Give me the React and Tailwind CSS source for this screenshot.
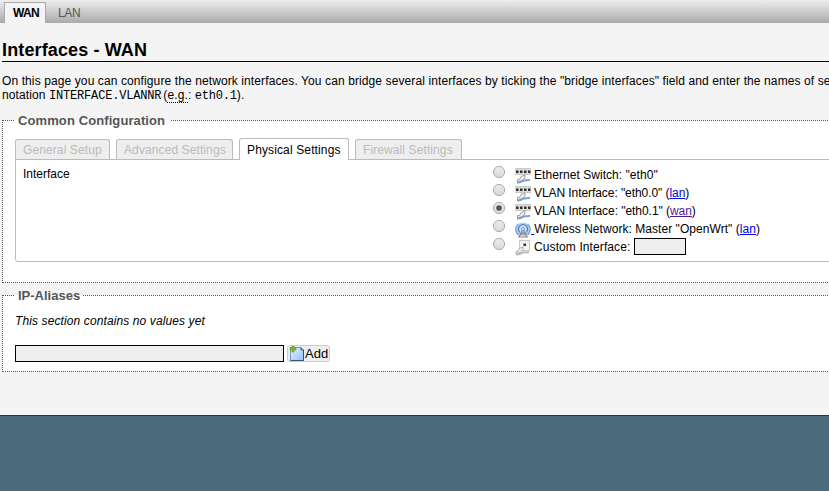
import React from "react";

const SwitchIcon = () => (
  <svg width="16" height="16" viewBox="0 0 16 16" className="shrink-0">
    <rect x="0" y="0" width="16" height="7" fill="#dcdcd8" />
    <path d="M0 6.500h16M0 .5h16" stroke="#c8c8c4" />
    <path d="M1 2.500h2.500v2.500H1zM5 2.500h2.500v2.500H5zM9 2.500h2.500v2.500H9zM13 2.500h2.500v2.500H13z" fill="#2e2e2e" />
    <path d="M2 14.500c5 0 4.500-1.500 7-2s3.500.5 6-1" fill="none" stroke="#7a9fd0" strokeWidth="2" />
    <path d="M6 8.500l4-1.500v3l-3 2.500-4.500 1.500v-2.500h2z" fill="#f0f0f0" stroke="#8e8e8e" strokeWidth=".8" />
  </svg>
);

const WifiIcon = () => (
  <svg width="16" height="16" viewBox="0 0 16 16" className="shrink-0">
    <ellipse cx="8" cy="7.500" rx="7.800" ry="7" fill="#b4d0f0" />
    <path d="M3.500 13A7 7 0 0 1 3.500 2M12.500 13A7 7 0 0 0 12.500 2" fill="none" stroke="#6f9fd8" strokeWidth="1.200" />
    <path d="M5 10.500A4.500 4.500 0 1 1 11 10.500" fill="#d0e2f8" stroke="#4e84c4" strokeWidth="1.300" />
    <path d="M8 7L4 15M8 7l4 8M5.500 12.500l4.500-2M10.500 12.500l-4.500-2M3 15h10" fill="none" stroke="#888" strokeWidth="1.100" />
    <circle cx="8" cy="7" r="1.500" fill="#f4f4f4" stroke="#56759a" strokeWidth=".7" />
  </svg>
);

const PlugIcon = () => (
  <svg width="16" height="16" viewBox="0 0 16 16" className="shrink-0">
    <rect x="4.500" y=".5" width="10" height="10" fill="#f2f2f2" stroke="#c9c9c9" />
    <rect x="8.500" y="3.500" width="2.500" height="2.500" fill="#333" />
    <path d="M1 14.500c5 0 4.500-1.500 7-2s3.500.5 6-.5" fill="none" stroke="#bdbdbd" strokeWidth="2" />
    <path d="M4 8.500l4-1.500v3l-3 2.500-4 1.500v-2.500h2z" fill="#f0f0f0" stroke="#a0a0a0" strokeWidth=".8" />
  </svg>
);

const AddIcon = () => (
  <svg width="16" height="16" viewBox="0 0 16 16" className="shrink-0">
    <defs>
      <linearGradient id="page" x1="0" y1="0" x2="1" y2="1">
        <stop offset="0" stopColor="#e4f1ff" />
        <stop offset="1" stopColor="#8fc3f8" />
      </linearGradient>
    </defs>
    <path d="M1.500 1.500h10.500l2.500 2.500v10.500h-13z" fill="url(#page)" stroke="#6f9bc9" />
    <path d="M12 1.500v2.500h2.500v10.500h-13" fill="none" stroke="#38516d" />
    <path d="M3 0h2v2h2v2H5v2H3V4H1V2h2z" fill="#7dbb2a" stroke="#5a9c1a" strokeWidth=".6" />
  </svg>
);

const Radio = ({ on }) => (
  <svg width="13" height="13" viewBox="0 0 13 13" className="mb-[6px] shrink-0">
    <defs>
      <linearGradient id="radio" x1="0" y1="0" x2="0" y2="1">
        <stop offset="0" stopColor="#ececec" />
        <stop offset="1" stopColor="#d8d8d8" />
      </linearGradient>
    </defs>
    <circle cx="6" cy="6" r="5.600" fill="url(#radio)" stroke="#acacac" />
    {on && <circle cx="6" cy="6" r="2.800" fill="#555" />}
  </svg>
);

const Row = ({ on, icon, children }) => (
  <div className="flex h-[18px] items-center">
    <Radio on={on} />
    <span className="mt-[2px] ml-[9px] flex">{icon}</span>
    {children}
  </div>
);

const Tab = ({ width, active, children }) => (
  <div
    className={
      active
        ? "z-10 -mb-px h-[22px] rounded-t-[3px] border border-b-0 border-[#bbb] bg-white pt-[3px] pl-[7px] tracking-[0.13px] text-black " + width
        : "h-[20px] rounded-t-[3px] border border-b-0 border-[#bbb] bg-[#eee] pt-[2px] pl-[7px] tracking-[0.1px] text-[#bbb] " + width
    }
  >
    {children}
  </div>
);

const link = "text-[#0000ee] underline";

export default function App() {
  return (
    <div className="flex h-[491px] w-[829px] flex-col overflow-hidden bg-[#4a6b7c] font-['Liberation_Sans',Arial,sans-serif] text-[12px] leading-[16px] whitespace-nowrap text-black">
      <div className="flex h-[415px] shrink-0 flex-col bg-[#f4f4f4]">
        <header className="flex h-[23px] shrink-0 items-end bg-linear-to-b from-[#eee] to-[#aaa] pl-[4px]">
          <div className="h-[21px] w-[42px] border border-b-0 border-[#aaa] bg-[#f4f4f4] pt-[2px] pl-[8px] font-bold tracking-[-0.9px]">
            <span className="tracking-[-0.7px]">WAN</span>
          </div>
          <div className="h-[21px] pt-[3px] pl-[12px] tracking-[-0.4px] text-[#555]">LAN</div>
        </header>

        <h2 className="mt-[16px] ml-[2px] h-[23px] w-[900px] shrink-0 border-b border-black text-[18px] leading-[22px] font-bold tracking-[0.13px]">
          Interfaces - WAN
        </h2>

        <p className="mt-[12px] ml-[2px] h-[39px] shrink-0 leading-[14px] tracking-[0.105px]">
          On this page you can configure the network interfaces. You can bridge several interfaces by ticking the "bridge interfaces" field and enter the names of se
          <br />
          notation <span className="font-['Liberation_Mono',monospace] tracking-[-0.18px]">INTERFACE.VLANNR</span><span className="ml-[2px]">(</span><span className="border-b border-dotted border-black">e.g.</span>:{" "}
          <span className="font-['Liberation_Mono',monospace] tracking-[-0.2px]">eth0.1</span>).
        </p>

        <fieldset className="ml-[2px] h-[170px] w-[900px] shrink-0 border border-dotted border-[#555] bg-white px-[12px]">
          <legend className="h-[15px] pr-[5px] pl-[3px] text-[13px] leading-[15px] font-bold tracking-[0.1px] text-[#555]">Common Configuration</legend>
          <div className="mt-[10px] flex items-end gap-[6px]">
            <Tab width="w-[95px]">General Setup</Tab>
            <Tab width="w-[117px]">Advanced Settings</Tab>
            <Tab width="w-[110px]" active>Physical Settings</Tab>
            <Tab width="w-[107px]">Firewall Settings</Tab>
          </div>
          <div className="flex h-[103px] w-[860px] rounded-bl-[3px] border border-[#bbb] bg-white">
            <div className="w-[477px] pt-[6px] pl-[7px]">Interface</div>
            <div className="flex flex-col pt-[6px]">
              <Row icon={<SwitchIcon />}><span className="ml-[3px] tracking-[0.05px]">Ethernet Switch: "eth0"</span></Row>
              <Row icon={<SwitchIcon />}><span className="ml-[3px] tracking-[-0.07px]">VLAN Interface: "eth0.0" (<a className={link}>lan</a>)</span></Row>
              <Row on icon={<SwitchIcon />}><span className="ml-[3px] tracking-[-0.05px]">VLAN Interface: "eth0.1" (<a className="text-[#551a8b] underline">wan</a>)</span></Row>
              <Row icon={<WifiIcon />}><a className={link + " whitespace-pre"}> </a><span className="tracking-[0.05px]">Wireless Network: Master "OpenWrt" (<a className={link}>lan</a>)</span></Row>
              <Row icon={<PlugIcon />}>
                <span className="ml-[3px] w-[97px] tracking-[0.1px]">Custom Interface:</span>
                <input className="mb-[2px] ml-[3px] h-[17px] w-[52px] border border-black bg-[#eee]" />
              </Row>
            </div>
          </div>
        </fieldset>

        <fieldset className="mt-[5px] ml-[2px] h-[84px] w-[900px] shrink-0 border border-dotted border-[#555] bg-white px-[12px]">
          <legend className="h-[15px] px-[3px] text-[13px] leading-[15px] font-bold text-[#555]">IP-Aliases</legend>
          <div className="mt-[10px] tracking-[0.11px] italic">This section contains no values yet</div>
          <div className="mt-[16px] flex gap-[3px]">
            <input className="h-[17px] w-[269px] border border-black bg-[#eee]" />
            <button className="flex h-[17px] w-[43px] items-center rounded-[3px] border border-[#ccc] bg-[#eee] pl-px text-[13px] leading-[15px]">
              <AddIcon />Add
            </button>
          </div>
        </fieldset>
      </div>
      <footer className="h-[76px] border-t border-[#333]" />
    </div>
  );
}
